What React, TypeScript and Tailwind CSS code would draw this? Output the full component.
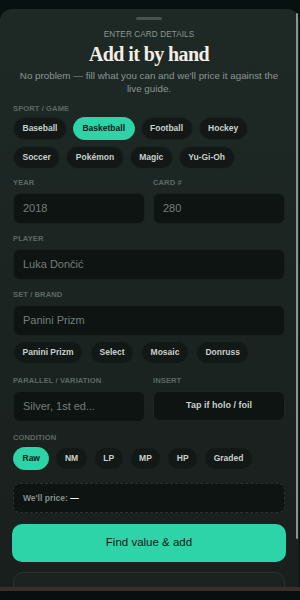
import React from "react";

const sans = { fontFamily: '"Liberation Sans", Arial, sans-serif' };

function Chip({ label, active = false }: { label: string; active?: boolean }) {
  return (
    <div
      className={
        "h-[23px] flex items-center px-[8.5px] rounded-full text-[8.5px] font-bold " +
        (active
          ? "bg-[#2dd4a7] text-[#0c2019] border border-[#2dd4a7]"
          : "bg-[#111816] text-[#c9cfcc] border border-[#1c2421]")
      }
    >
      {label}
    </div>
  );
}

function Label({ children, className = "" }: { children: React.ReactNode; className?: string }) {
  return (
    <div className={"text-[7.6px] leading-[10px] font-bold tracking-[0.01em] text-[#5c6964] uppercase " + className}>
      {children}
    </div>
  );
}

function Field({ value, className = "" }: { value: string; className?: string }) {
  return (
    <div
      className={
        "h-[31px] rounded-[7px] bg-[#0e1412] border border-[#1a211f] flex items-center px-[9px] text-[11px] text-[#737d79] " +
        className
      }
    >
      {value}
    </div>
  );
}

export default function App() {
  return (
    <div className="w-[300px] h-[600px] bg-[#07110f] overflow-hidden relative flex flex-col" style={sans}>
      <div className="mt-[9px] w-[299px] flex-1 min-h-0 rounded-t-[12px] bg-gradient-to-b from-[#1e2926] to-[#191f1d] relative pl-[13px] pr-[14px] overflow-hidden">
        <div className="mx-auto mt-[8px] w-[26px] h-[3px] rounded-full bg-[#48534f]" />
        <div className="mt-[9px] text-center text-[8.2px] leading-[12px] tracking-[0.01em] text-[#8a9591] uppercase">
          Enter card details
        </div>
        <div
          className="mt-[1px] text-center text-[20px] leading-[24px] font-bold tracking-[-0.03em] text-[#f3efe6]"
          style={{ fontFamily: '"Liberation Serif", "Times New Roman", serif' }}
        >
          Add it by hand
        </div>
        <div className="mt-[3px] text-center text-[9.8px] leading-[13px] text-[#8c9692] px-[4px]">
          No problem — fill what you can and we'll price it against the live guide.
        </div>

        <Label className="mt-[9px]">Sport / Game</Label>
        <div className="mt-[3px] flex flex-wrap gap-x-[6px] gap-y-[6px]">
          <Chip label="Baseball" />
          <Chip label="Basketball" active />
          <Chip label="Football" />
          <Chip label="Hockey" />
          <Chip label="Soccer" />
          <Chip label="Pokémon" />
          <Chip label="Magic" />
          <Chip label="Yu-Gi-Oh" />
        </div>

        <div className="mt-[9px] grid grid-cols-2 gap-x-[8px]">
          <div>
            <Label>Year</Label>
            <Field value="2018" className="mt-[5px]" />
          </div>
          <div>
            <Label>Card #</Label>
            <Field value="280" className="mt-[5px]" />
          </div>
        </div>

        <Label className="mt-[10px]">Player</Label>
        <Field value="Luka Dončić" className="mt-[5px]" />

        <Label className="mt-[10px]">Set / Brand</Label>
        <Field value="Panini Prizm" className="mt-[5px]" />
        <div className="mt-[5px] flex gap-[7px]">
          <Chip label="Panini Prizm" />
          <Chip label="Select" />
          <Chip label="Mosaic" />
          <Chip label="Donruss" />
        </div>

        <div className="mt-[12px] grid grid-cols-2 gap-x-[8px]">
          <div>
            <Label>Parallel / Variation</Label>
            <Field value="Silver, 1st ed..." className="mt-[5px] text-[#565f5c]" />
          </div>
          <div>
            <Label>Insert</Label>
            <div className="mt-[5px] h-[30px] rounded-[7px] bg-[#0e1412] border border-[#1f2724] flex items-center justify-center text-[9px] font-bold text-[#c9cfcc]">
              Tap if holo / foil
            </div>
          </div>
        </div>

        <Label className="mt-[11px]">Condition</Label>
        <div className="mt-[4px] flex gap-[6px]">
          <Chip label="Raw" active />
          <Chip label="NM" />
          <Chip label="LP" />
          <Chip label="MP" />
          <Chip label="HP" />
          <Chip label="Graded" />
        </div>

        <div className="mt-[13px] h-[30px] rounded-[7px] bg-[#0e1412] border border-dashed border-[#2b3330] flex items-center px-[9px] text-[8.5px] font-bold text-[#858f8b]">
          We'll price:&nbsp;<span className="text-[#f1f1ee]">—</span>
        </div>

        <div className="mt-[11px] -mx-[1px] h-[38px] rounded-[10px] bg-[#2dd4a7] flex items-center justify-center text-[11.5px] text-[#0f2119]">
          Find value &amp; add
        </div>

        <div className="mt-[10px] h-[40px] rounded-[10px] border border-[#2a3230] bg-[#1b2220]" />
      </div>
      <div className="h-[4px] bg-[#3a2e26] shrink-0" />
      <div className="h-[9px] bg-[#07100e] shrink-0" />
      <div className="absolute left-[296px] top-[13px] w-[2px] h-[526px] rounded-full bg-[#8d9290]" />
    </div>
  );
}
